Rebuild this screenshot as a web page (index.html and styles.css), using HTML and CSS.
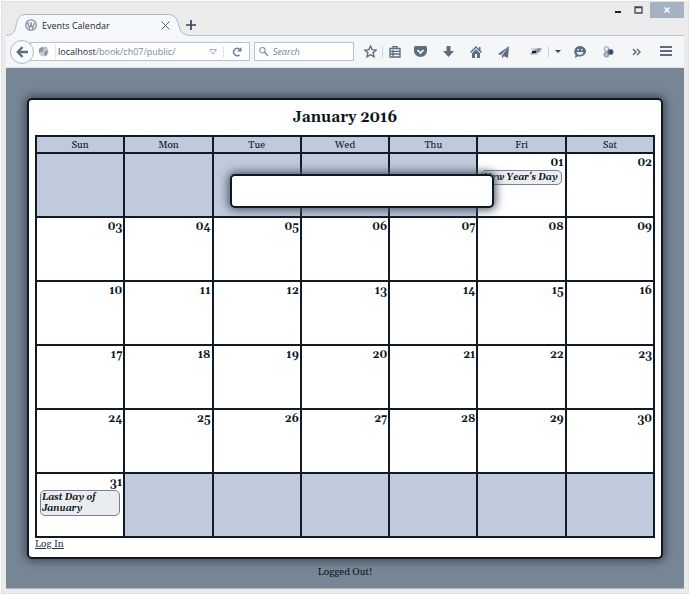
FILE: index.html
```html
<!DOCTYPE html>
<html lang="en">
<head>
<meta charset="utf-8">
<title>Events Calendar</title>
<link rel="stylesheet" href="styles.css">
</head>
<body>
<div class="window">
  <header class="titlebar">
    <div class="tab">
      <svg class="tab-shape" width="184" height="22" viewBox="0 0 184 22"><path d="M0 22V21.500C8 21 9 17 10 12 11 4 14 .5 20 .5H162C168 .5 171 4 173 12 174 18 177 21 184 21.500V22Z" fill="#f7f8fa"/><path d="M0 21.500C8 21 9 17 10 12 11 4 14 .5 20 .5H162C168 .5 171 4 173 12 174 18 177 21 184 21.500" fill="none" stroke="#a9b9d2"/></svg>
      <svg class="favicon" width="12" height="12" viewBox="0 0 12 12" fill="none" stroke="#7d8da1"><circle cx="6" cy="6" r="5.200" stroke-width="1.300"/><path d="M2.500 4 4.500 9 6 5 7.500 9 9.500 4M2 4h2M5 4h2" stroke-width="1.200"/></svg>
      <span class="tab-title">Events Calendar</span>
      <button class="plain" aria-label="Close tab"><svg width="9" height="9" viewBox="0 0 9 9" stroke="#4d5c70"><path d="M.5.500l8 8M8.500.500l-8 8"/></svg></button>
    </div>
    <button class="plain new-tab" aria-label="New tab"><svg width="10" height="10" viewBox="0 0 10 10" stroke="#33465c" stroke-width="1.700"><path d="M5 0v10M0 5h10"/></svg></button>
    <div class="controls">
      <button class="plain control" aria-label="Minimize"><svg width="8" height="8" viewBox="0 0 8 8"><path d="M1 5h6v2H1z" fill="#182331"/></svg></button>
      <button class="plain control" aria-label="Maximize"><svg width="9" height="8" viewBox="0 0 9 8"><path d="M1 1h7v6H1zM1 1.500h7" fill="none" stroke="#3f4b59" stroke-width="1.300"/></svg></button>
      <button class="plain control close" aria-label="Close"><svg width="6" height="6" viewBox="0 0 6 6" stroke="#fff" stroke-width="1.500"><path d="M.5.500l5 5M5.500.500l-5 5"/></svg></button>
    </div>
  </header>

  <nav class="toolbar">
    <button class="plain back" aria-label="Back"><svg width="12" height="12" viewBox="0 0 12 12" fill="none" stroke="#5c6d82" stroke-width="2.400"><path d="M6.500 1 1.800 6l4.700 5M2 6h10"/></svg></button>
    <div class="address">
      <svg width="11" height="11" viewBox="0 0 11 11"><circle cx="5.500" cy="5.500" r="5" fill="#c3cad3"/><path d="M1 3 4 1l2 2-2 3H1zM6 6l4-2-1 5-2 1zM7 1l2 1-1 1z" fill="#8794a4"/></svg>
      <label class="url"><b>localhost</b>/book/ch07/public/<input class="url-input" aria-label="Address"></label>
      <svg class="drop" width="8" height="6" viewBox="0 0 8 6" fill="none" stroke="#a5b1c2"><path d="M.5.500h7L4 5z"/></svg>
      <button class="plain reload" aria-label="Reload"><svg width="10" height="10" viewBox="0 0 10 10"><path d="M7.500 7.800A3.600 3.600 0 1 1 7.500 2.200" fill="none" stroke="#6f7f92" stroke-width="1.500"/><path d="M9.500 0v4.500H5z" fill="#6f7f92"/></svg></button>
    </div>
    <div class="search">
      <svg width="11" height="11" viewBox="0 0 11 11" fill="none" stroke="#7d8da1"><circle cx="4" cy="4" r="3.200" stroke-width="1.300"/><path d="m6.500 6.500 4 4" stroke-width="1.700"/></svg>
      <input type="search" placeholder="Search" aria-label="Search">
    </div>
    <div class="icons">
      <button class="plain icon" aria-label="Bookmark"><svg width="13" height="13" viewBox="0 0 13 13"><path d="m6.500 1 1.600 3.700 4 .4-3 2.700.9 4-3.500-2.100L3 11.800l.9-4-3-2.700 4-.4z" fill="none" stroke="#5c6d82" stroke-width="1.400"/></svg></button>
      <button class="plain icon divided" aria-label="Bookmarks list"><svg width="12" height="12" viewBox="0 0 12 12" fill="none" stroke="#5c6d82" stroke-width="1.300"><path d="M1 2.500h10v8.500H1zM1 5.300h10M1 8h10M4 4v7M4 2V.7h4V2"/></svg></button>
      <button class="plain icon" aria-label="Pocket"><svg width="13" height="11" viewBox="0 0 13 11"><path d="M1.500 0h10Q13 0 13 1.500V5a6.500 6 0 0 1-13 0V1.500Q0 0 1.500 0z" fill="#5c6d82"/><path d="m3.500 4 3 3 3-3" fill="none" stroke="#fff" stroke-width="1.600"/></svg></button>
      <button class="plain icon" aria-label="Downloads"><svg width="11" height="11" viewBox="0 0 11 11"><path d="M3.500 0h4v5H11l-5.500 6L0 5h3.500z" fill="#5c6d82"/></svg></button>
      <button class="plain icon" aria-label="Home"><svg width="12" height="12" viewBox="0 0 12 12" fill="#5c6d82"><path d="M6 0 9 3V1h1.500v3.500L12 6l-1 1-5-5-5 5-1-1zM6 3.300l4 4V12H7V8H5v4H2V7.300z"/></svg></button>
      <button class="plain icon" aria-label="Share"><svg width="12" height="12" viewBox="0 0 12 12" fill="#5c6d82"><path d="M11 0 0 8l3 1zM11 0 4 9.500V12l2-1.800L10 12z"/></svg></button>
      <button class="plain icon addon" aria-label="Edit"><svg width="12" height="9" viewBox="0 0 12 9"><path d="M1 2h7M0 7h8" stroke="#aab5c1"/><path d="m1 7 1-3 7-3 2 1-1 3-6 2z" fill="#8593a3"/><path d="M2 4h4v2H2z" fill="#182331"/><path d="M8 2h4" stroke="#8391a1"/></svg></button>
      <button class="plain icon divided narrow" aria-label="Edit options"><svg width="6" height="3" viewBox="0 0 6 3"><path d="M0 0h6L3 3z" fill="#33465c"/></svg></button>
      <button class="plain icon" aria-label="Chat"><svg width="12" height="12" viewBox="0 0 12 12"><path d="M6 0a6 5.300 0 1 1-2 10.300L1 12l.5-3A5.600 5.600 0 0 1 6 0z" fill="#5c6d82"/><path d="M2.500 6h7Q9 9 6 9T2.500 6zM3.500 3H5v1.500H3.500zM7 3h1.500v1.500H7z" fill="#e6eaf0"/></svg></button>
      <button class="plain icon" aria-label="Extension"><svg width="11" height="12" viewBox="0 0 11 12"><circle cx="3.500" cy="3" r="2.300" fill="#e6eaf0" stroke="#8b9aad"/><circle cx="3.500" cy="8.500" r="2.600" fill="#aab7c8" stroke="#8b9aad"/><circle cx="7.500" cy="6" r="3" fill="#5c6d82"/><circle cx="8" cy="6" r="1.400" fill="#26364a"/></svg></button>
      <button class="plain icon" aria-label="More tools"><svg width="9" height="8" viewBox="0 0 9 8" fill="none" stroke="#5c6d82" stroke-width="1.500"><path d="m1 1 3 3-3 3M5 1l3 3-3 3"/></svg></button>
      <button class="plain icon menu" aria-label="Menu"><svg width="12" height="11" viewBox="0 0 12 11" fill="#5c6d82"><path d="M0 0h12v2H0zM0 4h12v2H0zM0 8h12v2H0z"/></svg></button>
    </div>
  </nav>

  <main class="page">
    <section class="panel">
      <h1>January 2016</h1>
      <table>
        <thead><tr><th>Sun</th><th>Mon</th><th>Tue</th><th>Wed</th><th>Thu</th><th>Fri</th><th>Sat</th></tr></thead>
        <tbody>
          <tr><td class="fill"></td><td class="fill"></td><td class="fill"></td><td class="fill"></td><td class="fill"></td><td><strong>01</strong><a class="event" href="#">New Year's Day</a></td><td><strong>02</strong></td></tr>
          <tr><td><strong>03</strong></td><td><strong>04</strong></td><td><strong>05</strong></td><td><strong>06</strong></td><td><strong>07</strong></td><td><strong>08</strong></td><td><strong>09</strong></td></tr>
          <tr><td><strong>10</strong></td><td><strong>11</strong></td><td><strong>12</strong></td><td><strong>13</strong></td><td><strong>14</strong></td><td><strong>15</strong></td><td><strong>16</strong></td></tr>
          <tr><td><strong>17</strong></td><td><strong>18</strong></td><td><strong>19</strong></td><td><strong>20</strong></td><td><strong>21</strong></td><td><strong>22</strong></td><td><strong>23</strong></td></tr>
          <tr><td><strong>24</strong></td><td><strong>25</strong></td><td><strong>26</strong></td><td><strong>27</strong></td><td><strong>28</strong></td><td><strong>29</strong></td><td><strong>30</strong></td></tr>
          <tr><td><strong>31</strong><a class="event" href="#">Last Day of January</a></td><td class="fill"></td><td class="fill"></td><td class="fill"></td><td class="fill"></td><td class="fill"></td><td class="fill"></td></tr>
        </tbody>
      </table>
      <a class="login" href="#">Log In</a>
    </section>
    <p class="status">Logged Out!</p>
    <div class="modal" role="dialog" aria-label="Event"></div>
  </main>
</div>
</body>
</html>
```
FILE: styles.css
```css
* { box-sizing: border-box; }

body {
  margin: 0;
  background: #fff;
  font-family: Georgia, Gelasio, "Liberation Serif", serif;
  color: #0c1420;
}

.window {
  margin: 1px 1px 0 1px;
  padding: 0 4px 4px;
  background: #ebebeb;
  border: 1px dotted #d3d8df;
}

.plain {
  display: flex;
  align-items: center;
  justify-content: center;
  padding: 0;
  border: 0;
  background: none;
}

.titlebar {
  display: flex;
  height: 34px;
  align-items: flex-end;
  border-bottom: 1px solid #b4c1d6;
}

.tab {
  position: relative;
  display: flex;
  align-items: center;
  width: 176px;
  height: 22px;
  padding: 0 12px 0 19px;
  gap: 5px;
  margin-bottom: -1px;
  font: 9px "Open Sans", sans-serif;
}

.tab-shape { position: absolute; left: 0; top: 0; }
.favicon, .tab-title, .tab .plain { position: relative; }
.tab-title { flex: 1; color: #182738; white-space: nowrap; }

.new-tab { width: 18px; height: 20px; }

.controls {
  display: flex;
  align-self: flex-start;
  margin-left: auto;
}

.control { width: 20px; height: 16px; }
.close { width: 34px; background: #a4b2c2; margin-left: 2px; }

.toolbar {
  display: flex;
  align-items: center;
  height: 32px;
  padding: 0 4px;
  background: #f5f6f7;
  border-bottom: 1px solid #e2e4e8;
  font: 9px "Open Sans", sans-serif;
}

.back {
  position: relative;
  z-index: 1;
  flex: none;
  width: 24px;
  height: 24px;
  border: 1px solid #a9b9d2;
  border-radius: 50%;
  background: #f9fafb;
}

.address, .search {
  display: flex;
  align-items: center;
  height: 19px;
  background: #fff;
  border: 1px solid #b4c1d6;
}

.address {
  flex: 222;
  min-width: 0;
  margin-left: -4px;
  padding-left: 7px;
}

.url {
  display: flex;
  flex: 1;
  min-width: 0;
  margin-left: 6px;
  padding-left: 2px;
  border-left: 1px solid #e2e6ec;
  color: #77879b;
  line-height: 15px;
}

.url b { font-weight: 400; color: #182738; }

.url-input {
  flex: 1;
  width: 0;
  min-width: 0;
  height: 15px;
  padding: 0;
  border: 0;
  background: none;
}

.drop { margin-right: 6px; }
.reload { width: 26px; height: 12px; border-left: 1px solid #dde2e9; }

.search {
  flex: 94;
  min-width: 0;
  margin: 0 4px;
  padding: 0 4px;
  gap: 4px;
}

.search input {
  width: 100%;
  min-width: 0;
  padding: 0;
  border: 0;
  background: none;
  font: italic 9px "Open Sans", sans-serif;
}

.search input::placeholder { color: #6f7f92; opacity: 1; }

.icons { display: flex; align-items: center; }
.icon { width: 28px; height: 12px; }
.icon:first-child { width: 24px; }
.divided { width: 24px; border-left: 1px solid #c9d3e1; }
.addon { width: 24px; margin-left: 6px; }
.narrow { width: 18px; }
.menu { margin-left: 2px; }

.page {
  position: relative;
  padding: 30px 21px 10px;
  background: #778695;
  border-bottom: 1px solid #a9b9d2;
}

.panel {
  padding: 8px 6px 7px;
  background: #fff;
  border: 2px solid #111820;
  border-radius: 5px;
  box-shadow: 0 0 10px 2px #3d4857;
}

h1 {
  margin: 0 0 8px;
  font-size: 15px;
  line-height: 19px;
  text-align: center;
}

table {
  width: 100%;
  table-layout: fixed;
  border-collapse: collapse;
}

th, td { border: 2px solid #111a26; }

th {
  height: 17px;
  padding: 0;
  background: #bfcbdd;
  font-size: 10px;
  font-weight: 400;
  line-height: 14px;
}

td {
  height: 64px;
  padding: 2px 1px 0;
  vertical-align: top;
}

.fill { background: #bfcbdd; }

strong {
  display: block;
  font-size: 11px;
  line-height: 14px;
  text-align: right;
}

.event {
  display: block;
  margin: 0 2px;
  padding: 1px;
  border: 1px solid #71829b;
  border-radius: 5px;
  background: #ebecee;
  color: #0c1420;
  font-size: 9px;
  font-weight: 700;
  font-style: italic;
  line-height: 11px;
  text-decoration: none;
}

.login, .status { font-size: 10px; line-height: 12px; }
.login { display: block; width: max-content; color: #26364a; }
.status { margin: 7px 0 0; text-align: center; }

.modal {
  position: absolute;
  top: 106px;
  left: 33%;
  width: 39%;
  height: 34px;
  background: #fff;
  border: 2px solid #111820;
  border-radius: 5px;
  box-shadow: 0 0 10px 2px #4c5665;
}
```
